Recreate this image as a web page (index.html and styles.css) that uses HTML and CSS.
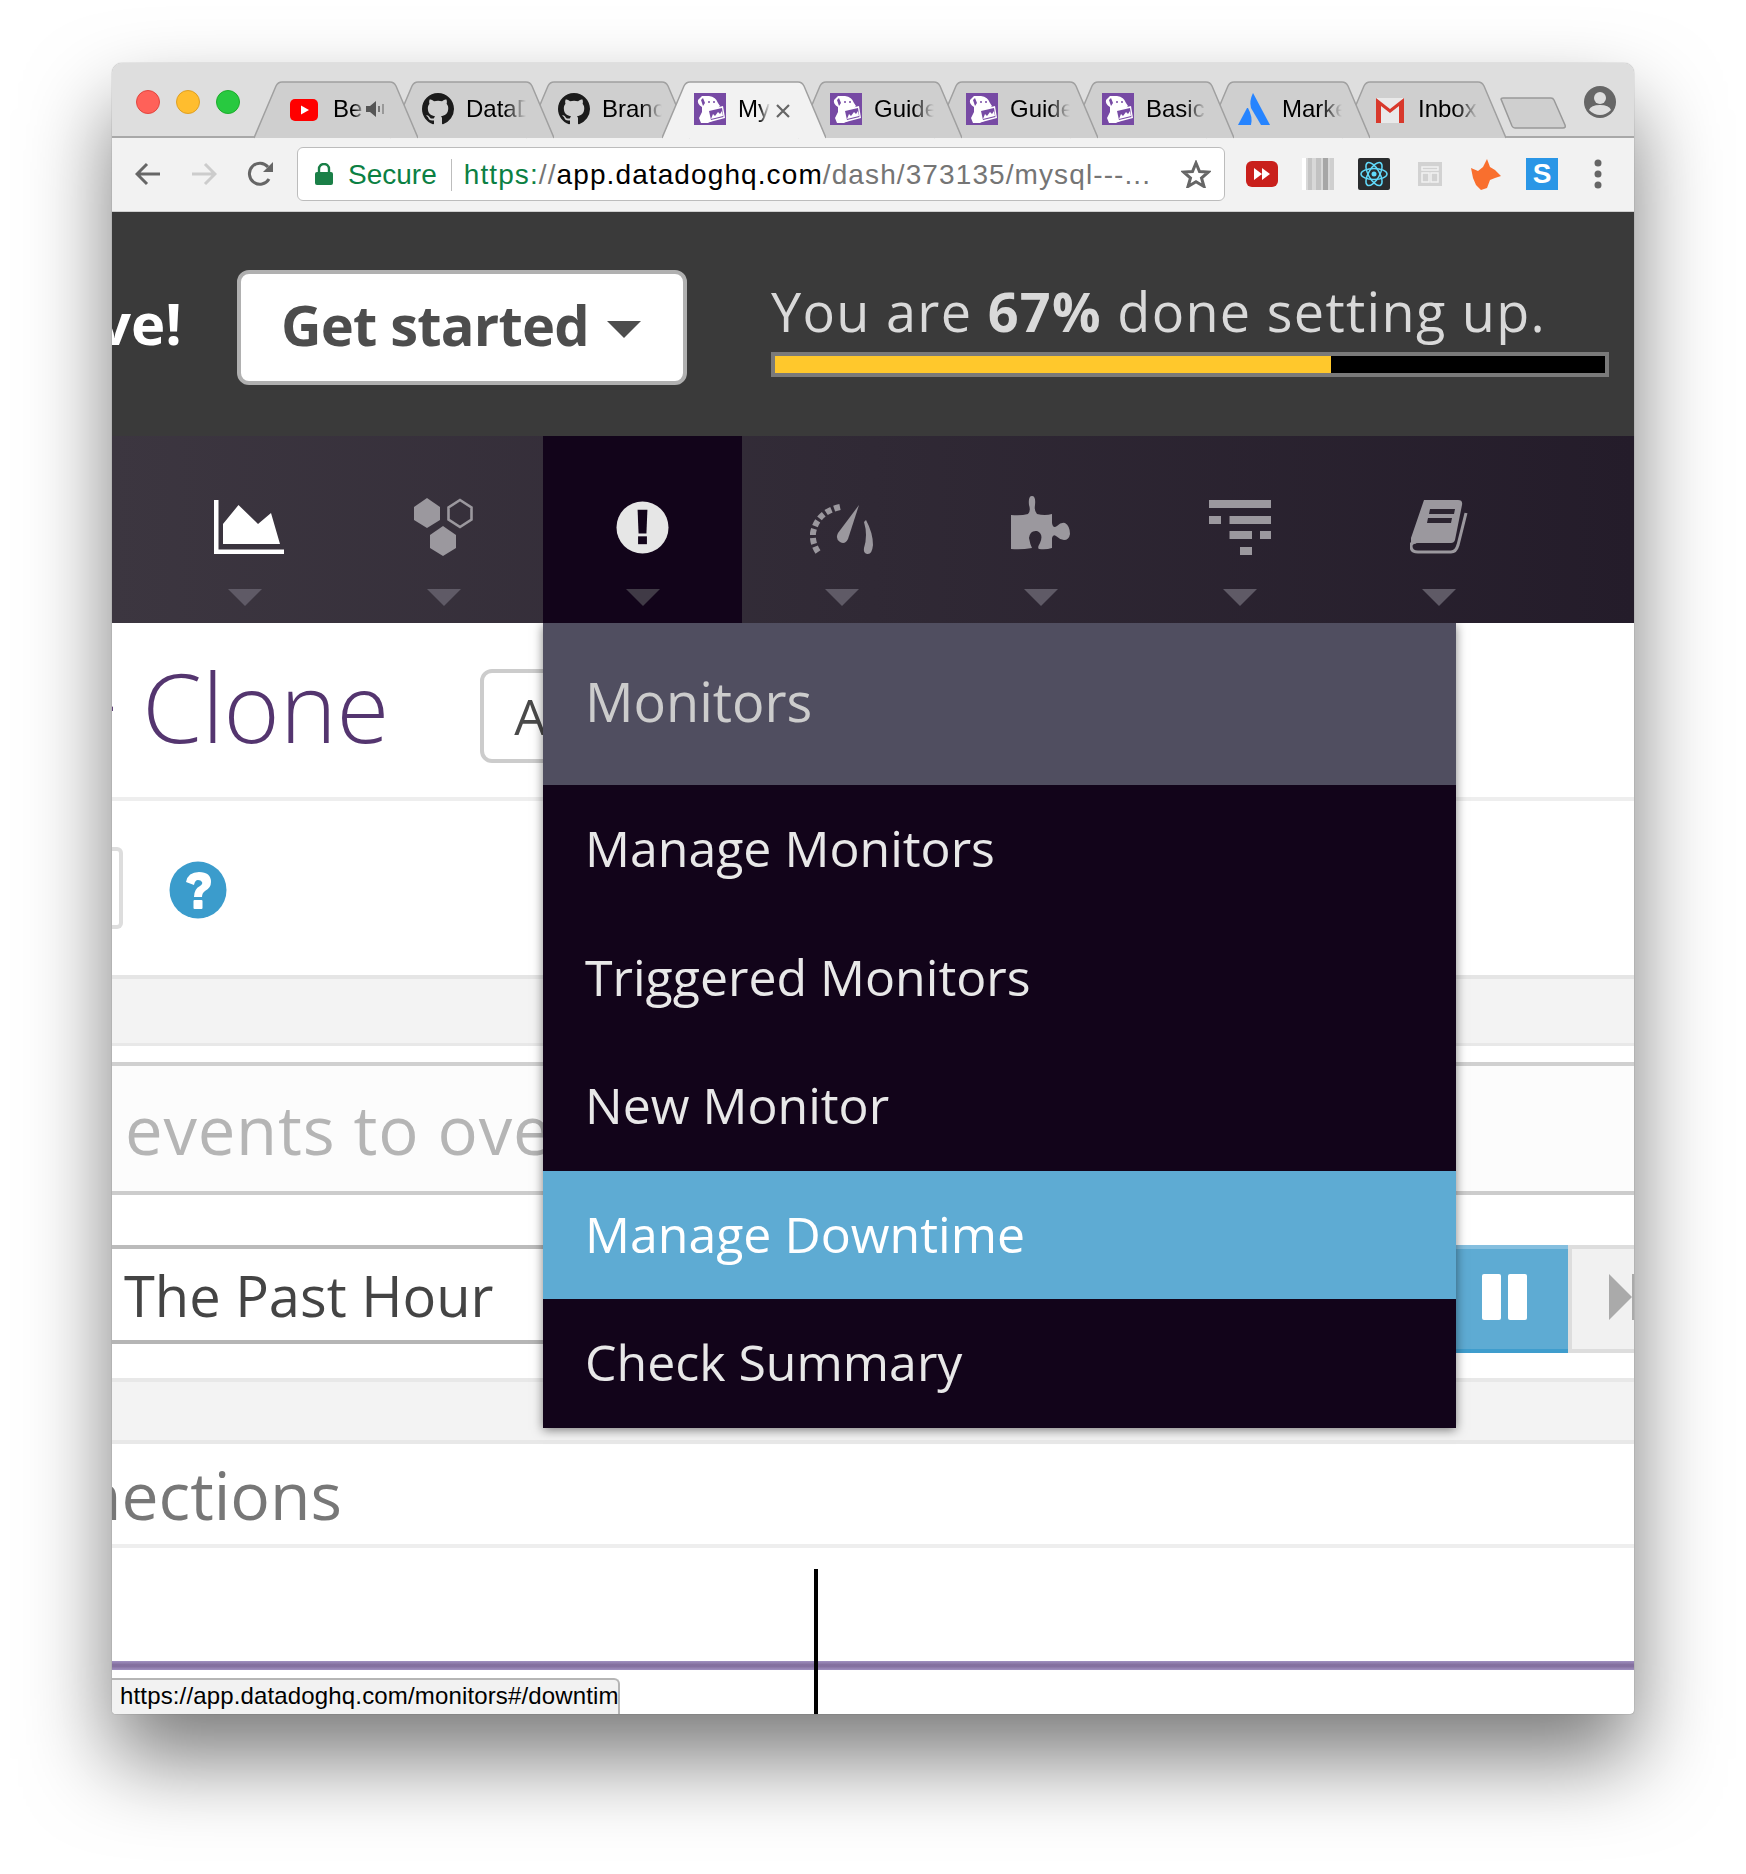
FILE: index.html
```html
<!DOCTYPE html>
<html lang="en">
<head>
    <meta charset="UTF-8">
    <title>Datadog - Manage Downtime</title>
    <link rel="stylesheet" href="styles.css">
</head>
<body>

<svg class="defs" width="0" height="0">
    <defs>
        <symbol id="tabshape" viewBox="0 0 164 58">
            <path d="M0 57 L22 5 Q24 1 28 1 L136 1 Q140 1 142 5 L164 57"/>
        </symbol>
        <symbol id="github" viewBox="0 0 16 16">
            <path fill="#1b1b1b" fill-rule="evenodd" d="M8 0C3.58 0 0 3.58 0 8c0 3.54 2.29 6.53 5.47 7.59.4.07.55-.17.55-.38 0-.19-.01-.82-.01-1.49-2.01.37-2.53-.49-2.69-.94-.09-.23-.48-.94-.82-1.13-.28-.15-.68-.52-.01-.53.63-.01 1.08.58 1.23.82.72 1.21 1.87.87 2.33.66.07-.52.28-.87.51-1.07-1.78-.2-3.64-.89-3.64-3.95 0-.87.31-1.59.82-2.15-.08-.2-.36-1.02.08-2.12 0 0 .67-.21 2.2.82.64-.18 1.32-.27 2-.27s1.36.09 2 .27c1.53-1.04 2.2-.82 2.2-.82.44 1.1.16 1.92.08 2.12.51.56.82 1.27.82 2.15 0 3.07-1.87 3.75-3.65 3.95.29.25.54.73.54 1.48 0 1.07-.01 1.93-.01 2.2 0 .21.15.46.55.38A8.01 8.01 0 0 0 16 8c0-4.42-3.58-8-8-8z"/>
        </symbol>
        <symbol id="dog" viewBox="0 0 32 32">
            <rect width="32" height="32" fill="#774aa4"/>
            <path fill="#fff" d="M4 7 L8 3 L15 3 Q22 4 24 10 L26 13 L23 16 L18 18 L16 21 L18 28 L14 30 L7 30 L5 25 L8 19 L8 14 Q3 11 4 7Z"/>
            <path fill="#774aa4" d="M7 7 L9 5 L11 10 L9 13Z"/>
            <circle fill="#774aa4" cx="15" cy="9" r="1"/>
            <circle fill="#774aa4" cx="20" cy="9" r="1"/>
            <path fill="#fff" d="M13 17 L29 13 L31 25 L16 29Z"/>
            <path fill="#774aa4" d="M15 18 L28 15 L29.500 24 L17 27Z"/>
            <path fill="#fff" d="M17 26 L19 21 L21 23 L24 19 L26 21 L28 18 L29 23Z"/>
        </symbol>
    </defs>
</svg>

<div class="window">

    <!-- tabs -->
    <div class="tabstrip">
        <div class="lights">
            <span class="light red"></span>
            <span class="light yellow"></span>
            <span class="light green"></span>
        </div>
        <div class="tabs">
            <div class="tab tab-yt">
                <svg class="tabbg"><use href="#tabshape"/></svg>
                <svg class="yt-icon" viewBox="0 0 28 22"><rect width="28" height="22" rx="5" fill="#f00"/><path d="M11 6.500 L19 11 L11 15.500Z" fill="#fff"/></svg>
                <span class="title title-short">Be</span>
                <svg class="speaker" viewBox="0 0 19 20"><path d="M0 7 H4 L10 2 V18 L4 13 H0Z" fill="#555"/><rect x="12" y="7" width="2" height="6" fill="#777"/><rect x="16" y="5" width="2" height="10" fill="#999"/></svg>
            </div>
            <div class="tab">
                <svg class="tabbg"><use href="#tabshape"/></svg>
                <svg class="favicon"><use href="#github"/></svg>
                <span class="title">DataD</span>
            </div>
            <div class="tab">
                <svg class="tabbg"><use href="#tabshape"/></svg>
                <svg class="favicon"><use href="#github"/></svg>
                <span class="title">Branch</span>
            </div>
            <div class="tab active">
                <svg class="tabbg"><use href="#tabshape"/></svg>
                <svg class="favicon"><use href="#dog"/></svg>
                <span class="title title-short">My</span>
                <svg class="tabclose" viewBox="0 0 14 14"><path d="M1 1 L13 13 M13 1 L1 13" stroke="#666" stroke-width="2.200" fill="none"/></svg>
            </div>
            <div class="tab">
                <svg class="tabbg"><use href="#tabshape"/></svg>
                <svg class="favicon"><use href="#dog"/></svg>
                <span class="title">Guide</span>
            </div>
            <div class="tab">
                <svg class="tabbg"><use href="#tabshape"/></svg>
                <svg class="favicon"><use href="#dog"/></svg>
                <span class="title">Guide</span>
            </div>
            <div class="tab">
                <svg class="tabbg"><use href="#tabshape"/></svg>
                <svg class="favicon"><use href="#dog"/></svg>
                <span class="title">Basic</span>
            </div>
            <div class="tab">
                <svg class="tabbg"><use href="#tabshape"/></svg>
                <svg class="favicon" viewBox="0 0 32 32"><path d="M15 0 Q11 8 13 15 L23 32 H32Z" fill="#2684ff"/><path d="M9 15 L0 32 H13 Q15 24 10 15Z" fill="#2684ff"/></svg>
                <span class="title">Marke</span>
            </div>
            <div class="tab">
                <svg class="tabbg"><use href="#tabshape"/></svg>
                <svg class="favicon" viewBox="0 0 32 32"><path d="M2 5 H30 V30 H2Z" fill="#e9e9e9"/><path d="M2 5 L16 16 L30 5 V30 H25 V13 L16 20 L7 13 V30 H2Z" fill="#d8392c"/></svg>
                <span class="title">Inbox</span>
            </div>
        </div>
        <svg class="newtab" viewBox="0 0 66 32"><path d="M1 2 Q1 1 3 1 H51 Q53 1 54 3 L65 28 Q66 31 63 31 H15 Q13 31 12 29Z" fill="#cfcfcf" stroke="#999" stroke-width="1.500"/></svg>
        <svg class="profile" viewBox="0 0 32 32"><circle cx="16" cy="16" r="16" fill="#666"/><circle cx="16" cy="12" r="6" fill="#dedede"/><path d="M5 24 Q7 19 16 19 Q25 19 27 24 Q22 29 16 29 Q10 29 5 24Z" fill="#dedede"/></svg>
    </div>

    <!-- address bar -->
    <div class="toolbar">
        <svg class="nav-btn" viewBox="0 0 26 24"><path d="M25 12 H3 M12 2 L2 12 L12 22" stroke="#666" stroke-width="3" fill="none"/></svg>
        <svg class="nav-btn fwd" viewBox="0 0 26 24"><path d="M1 12 H23 M14 2 L24 12 L14 22" stroke="#ccc" stroke-width="3" fill="none"/></svg>
        <svg class="nav-btn reload" viewBox="0 0 27 26"><path d="M22 18 A10.500 10.500 0 1 1 21 6" stroke="#666" stroke-width="3" fill="none"/><path d="M26 1 V11 H16Z" fill="#666"/></svg>
        <div class="omnibox">
            <svg class="lock" viewBox="0 0 18 22"><path d="M4 9 V6 A5 5 0 0 1 14 6 V9" stroke="#1a7f47" stroke-width="2.400" fill="none"/><rect y="9" width="18" height="13" rx="2" fill="#1a7f47"/></svg>
            <span class="secure">Secure</span>
            <span class="url"><span class="url-green">https:</span><span class="url-gray">//</span><span class="url-host">app.datadoghq.com</span><span class="url-gray">/dash/373135/mysql---...</span></span>
            <svg class="star" viewBox="0 0 30 28"><path d="M15 3 L18.500 11.500 L27.500 12 L20.500 18 L23 26.500 L15 21.800 L7 26.500 L9.500 18 L2.500 12 L11.500 11.500Z" stroke="#666" stroke-width="3" fill="none"/></svg>
        </div>
        <div class="extensions">
            <svg class="ext" viewBox="0 0 32 32"><rect y="3" width="32" height="26" rx="6" fill="#c9201c"/><path d="M8 10 L16 16 L8 22Z M16 10 L24 16 L16 22Z" fill="#fff"/></svg>
            <svg class="ext" viewBox="0 0 32 32"><rect width="32" height="32" fill="#d8d8d8"/><rect width="4" height="32" fill="#fff"/><rect x="6" width="4" height="32" fill="#c4c4c4"/><rect x="14" width="5" height="32" fill="#c2c2c2"/><rect x="21" width="5" height="32" fill="#a6a6a6"/><rect x="28" width="4" height="32" fill="#cfcfcf"/></svg>
            <svg class="ext" viewBox="0 0 32 32"><rect width="32" height="32" rx="2" fill="#2a2c2e"/><g fill="none" stroke="#61dafb" stroke-width="1.500"><ellipse cx="16" cy="16" rx="13" ry="5.500"/><ellipse cx="16" cy="16" rx="13" ry="5.500" transform="rotate(60 16 16)"/><ellipse cx="16" cy="16" rx="13" ry="5.500" transform="rotate(120 16 16)"/></g><circle cx="16" cy="16" r="2.500" fill="#61dafb"/></svg>
            <svg class="ext" viewBox="0 0 32 32"><rect x="4" y="4" width="24" height="24" fill="#d2d2d2"/><path d="M8 9 H24 V12 H8Z M8 15 H15 V24 H8Z M17 15 H24 V24 H17Z" fill="none" stroke="#f2f2f2" stroke-width="1.500"/></svg>
            <svg class="ext" viewBox="0 0 32 32"><path d="M1 10 L8 13 L13 9 L17 1 L20 9 L25 12 L31 18 L25 20 L20 22 L17 30 L11 32 L6 27 L3 20Z" fill="#f96f2e"/></svg>
            <div class="ext ext-s">S</div>
            <svg class="ext" viewBox="0 0 32 32"><circle cx="16" cy="5" r="3.500" fill="#666"/><circle cx="16" cy="16" r="3.500" fill="#666"/><circle cx="16" cy="27" r="3.500" fill="#666"/></svg>
        </div>
    </div>

    <!-- page -->
    <div class="promo">
        <span class="promo-end">ve!</span>
        <div class="started">Get started <span class="caret"></span></div>
        <div class="setup">
            <div class="setup-text">You are <b>67%</b> done setting up.</div>
            <div class="setup-bar"><div class="setup-fill" style="width: 67%"></div></div>
        </div>
    </div>

    <nav class="mainnav">
        <div class="navitem">
            <div class="navslot">
                <svg class="icon-chart" viewBox="0 0 70 54"><path d="M0 0 H4.500 V49.500 H70 V54 H0Z" fill="#fff"/><path d="M9 44 V24 L24.500 5 L44 24 L57 13 L66 44Z" fill="#fff"/></svg>
            </div>
            <span class="navarrow"></span>
        </div>
        <div class="navitem">
            <div class="navslot">
                <svg class="icon-hex" viewBox="0 0 60 58"><g fill="#9b989e"><path d="M13 0 L26 9 V22 L13 30 L0 22 V9Z"/><path d="M29 28 L42 37 V50 L29 58 L16 50 V37Z"/></g><path d="M46 2 L57.500 9.500 V21.500 L46 29 L34.500 21.500 V9.500Z" fill="none" stroke="#9b989e" stroke-width="2.600"/></svg>
            </div>
            <span class="navarrow"></span>
        </div>
        <div class="navitem active">
            <div class="navslot">
                <svg class="icon-alert" viewBox="0 0 54 54"><circle cx="27" cy="27" r="26.500" fill="#e6e6e6"/><path d="M22 9 H32 L31 33 H23Z" fill="#12041a"/><rect x="22.500" y="36" width="9" height="8" fill="#12041a"/></svg>
            </div>
            <span class="navarrow"></span>
        </div>
        <div class="navitem">
            <div class="navslot">
                <svg class="icon-gauge" viewBox="0 0 64 52"><g fill="none" stroke="#9b989e" stroke-width="6" stroke-dasharray="6 3"><path d="M8 49 Q2 40 3 30 Q7 9 30 4"/></g><path d="M49 2 L38 36 Q35 42 30 39 Q25 36 28 30Z" fill="#9b989e"/><path d="M56 17 Q63 30 63 42 Q62 52 57 51 Q53 50 54 45 Q58 32 54 19Z" fill="#9b989e"/></svg>
            </div>
            <span class="navarrow"></span>
        </div>
        <div class="navitem">
            <div class="navslot">
                <svg class="icon-puzzle" viewBox="0 0 59 54"><path fill="#9b989e" d="M0 19 Q10 20 17 18 Q20 15 18 9 Q17 0 21 0 Q25 0 24 9 Q23 15 26 18 Q34 20 41 18 L41 27 Q42 33 46 30 Q50 26 54 27 Q59 30 59 38 Q58 44 53 44 Q48 43 45 40 Q42 38 41 42 L41 52 Q35 54 28 53 Q26 52 29 47 Q33 38 26 35 Q19 34 18 42 Q19 48 21 52 Q10 54 0 53Z"/></svg>
            </div>
            <span class="navarrow"></span>
        </div>
        <div class="navitem">
            <div class="navslot">
                <svg class="icon-filter" viewBox="0 0 62 55"><g fill="#9b989e"><rect width="62" height="8"/><rect y="16" width="12" height="8"/><rect x="20.500" y="16" width="41.500" height="8"/><rect x="20.500" y="31" width="22.500" height="8"/><rect x="51" y="31" width="11" height="8"/><rect x="31" y="47" width="12" height="8"/></g></svg>
            </div>
            <span class="navarrow"></span>
        </div>
        <div class="navitem">
            <div class="navslot">
                <svg class="icon-book" viewBox="0 0 58 54"><path fill="#9b989e" d="M14 0 H48 Q53 0 52 5 L45 40 Q44 43 41 43 H8 Q3 43 1 47 L1 38Z"/><path fill="none" stroke="#9b989e" stroke-width="3" d="M56 13 L48 45 Q46 52 41 52 H8 Q1 52 1 46 Q1 42 6 42"/><path fill="#2b2430" d="M20 9 H45 L44 14 H19Z M18 18 H42 L41 23 H17Z"/></svg>
            </div>
            <span class="navarrow"></span>
        </div>
    </nav>

    <div class="content">
        <div class="title-row">
            <span class="title-dash">-</span>
            <span class="clone">Clone</span>
            <div class="title-btn">Add</div>
        </div>

        <div class="help-row">
            <div class="box-end"></div>
            <svg class="help" viewBox="0 0 58 58"><circle cx="29" cy="29" r="28.500" fill="#3b9ccc"/><path d="M17 21 Q19 11 30 11 Q42 11 42 21 Q42 27 36 30 Q33 32 33 36 H25 Q25 28 31 25 Q34 23 33 21 Q32 19 29 19 Q26 19 25 24Z" fill="#fff"/><rect x="24.500" y="39" width="9" height="9" rx="1" fill="#fff"/></svg>
        </div>

        <div class="texture tex-first"></div>

        <div class="events-row">events to overlay</div>

        <div class="time-row">
            <div class="time-field">The Past Hour</div>
            <div class="pause"><span></span><span></span></div>
            <div class="next"><svg class="next-icon" viewBox="0 0 25 46"><path d="M0 0 L23 23 L0 46Z" fill="#aaa"/><rect x="23" width="2" height="46" fill="#aaa"/></svg></div>
        </div>

        <div class="texture tex-second"></div>

        <div class="conn-row">nections</div>

        <div class="graph">
            <div class="graph-line"></div>
            <div class="crosshair"></div>
        </div>

        <!-- dropdown -->
        <div class="menu">
            <div class="menu-head">Monitors</div>
            <div class="menu-item">Manage Monitors</div>
            <div class="menu-item">Triggered Monitors</div>
            <div class="menu-item">New Monitor</div>
            <div class="menu-item hover">Manage Downtime</div>
            <div class="menu-item">Check Summary</div>
        </div>

        <div class="status">https://app.datadoghq.com/monitors#/downtime</div>
    </div>
</div>

</body>
</html>
```

FILE: styles.css
```css
body {
    margin: 0;
    padding: 63px 112px 0;
    height: 1874px;
    box-sizing: border-box;
    background-color: #fff;
    overflow: hidden;
    font-family: "Open Sans", sans-serif;
}
.defs {
    position: absolute;
}
.window {
    width: 1522px;
    height: 1651px;
    border-radius: 10px 10px 4px 4px;
    overflow: hidden;
    box-shadow: 0 45px 85px rgba(0, 0, 0, 0.52), 0 0 1px rgba(0, 0, 0, 0.6);
    background-color: #fff;
    display: flex;
    flex-direction: column;
}

/* tab strip */
.tabstrip {
    height: 75px;
    flex: none;
    box-sizing: border-box;
    background-color: #dedede;
    border-bottom: 2px solid #a8a8a8;
    display: flex;
    align-items: flex-start;
    position: relative;
    font-family: "Liberation Sans", Arial, sans-serif;
}
.lights {
    display: flex;
    gap: 16px;
    padding: 27px 0 0 24px;
    width: 118px;
    flex: none;
}
.light {
    width: 24px;
    height: 24px;
    border-radius: 50%;
    box-sizing: border-box;
}
.red { background-color: #ff6159; border: 1px solid #e2463f; }
.yellow { background-color: #ffbd2e; border: 1px solid #dfa023; }
.green { background-color: #28c940; border: 1px solid #1dad2b; }
.tabs {
    display: flex;
    margin-top: 18px;
}
.tab {
    width: 136px;
    height: 57px;
    flex: none;
    position: relative;
    box-sizing: border-box;
    padding: 12px 0 0 32px;
    display: flex;
    align-items: flex-start;
}
.tab:nth-child(1) { z-index: 9; }
.tab:nth-child(2) { z-index: 8; }
.tab:nth-child(3) { z-index: 7; }
.tab:nth-child(4) { z-index: 10; }
.tab:nth-child(5) { z-index: 5; }
.tab:nth-child(6) { z-index: 4; }
.tab:nth-child(7) { z-index: 3; }
.tab:nth-child(8) { z-index: 2; }
.tab:nth-child(9) { z-index: 1; }
.tabbg {
    position: absolute;
    left: 0;
    top: 0;
    width: 164px;
    height: 58px;
    fill: #cfcfcf;
    stroke: #a0a0a0;
    stroke-width: 1.5;
}
.tab.active .tabbg {
    fill: #f2f2f2;
}
.favicon {
    width: 32px;
    height: 32px;
    flex: none;
    position: relative;
}
.yt-icon {
    width: 28px;
    height: 22px;
    flex: none;
    margin: 6px 0 0 4px;
    position: relative;
}
.title {
    position: relative;
    margin: 2px 0 0 12px;
    width: 62px;
    font-size: 24px;
    line-height: 28px;
    color: #000;
    white-space: nowrap;
    overflow: hidden;
    -webkit-mask-image: linear-gradient(to right, #000 65%, transparent 100%);
    mask-image: linear-gradient(to right, #000 65%, transparent 100%);
}
.title-short {
    width: 32px;
}
.tab-yt .title {
    margin-left: 15px;
}
.speaker {
    width: 19px;
    height: 20px;
    flex: none;
    position: relative;
    margin: 6px 0 0 1px;
}
.tabclose {
    width: 14px;
    height: 14px;
    flex: none;
    position: relative;
    margin: 11px 0 0 6px;
}
.newtab {
    position: absolute;
    left: 1388px;
    top: 34px;
    width: 66px;
    height: 32px;
}
.profile {
    position: absolute;
    left: 1472px;
    top: 23px;
    width: 32px;
    height: 32px;
}

/* toolbar */
.toolbar {
    height: 74px;
    flex: none;
    box-sizing: border-box;
    background-color: #f2f2f2;
    border-bottom: 1px solid #cfcfcf;
    display: flex;
    align-items: center;
    padding: 0 0 1px 23px;
    font-family: "Liberation Sans", Arial, sans-serif;
}
.nav-btn {
    width: 26px;
    height: 24px;
    flex: none;
    margin-right: 30px;
}
.nav-btn.reload {
    width: 27px;
    height: 26px;
    margin-right: 23px;
}
.omnibox {
    width: 928px;
    height: 54px;
    flex: none;
    box-sizing: border-box;
    background-color: #fff;
    border: 1.5px solid #bcbcbc;
    border-radius: 6px;
    display: flex;
    align-items: center;
    padding-left: 17px;
    font-size: 28px;
}
.lock {
    width: 18px;
    height: 22px;
    flex: none;
    margin-right: 15px;
}
.secure {
    color: #0b8043;
    padding-right: 14px;
    border-right: 1px solid #bdbdbd;
    line-height: 32px;
    margin-top: 2px;
}
.url {
    padding-left: 12px;
    white-space: nowrap;
    flex: 1;
    letter-spacing: 1.1px;
    margin-top: 2px;
}
.url-green { color: #0b8043; }
.url-gray { color: #757575; }
.url-host { color: #000; }
.star {
    width: 30px;
    height: 28px;
    flex: none;
    margin-right: 13px;
}
.extensions {
    display: flex;
    gap: 24px;
    margin-left: 21px;
}
.ext {
    width: 32px;
    height: 32px;
    flex: none;
}
.ext-s {
    background-color: #2a96e6;
    color: #fff;
    font-weight: bold;
    font-size: 28px;
    line-height: 32px;
    text-align: center;
}

/* promo bar */
.promo {
    height: 224px;
    flex: none;
    background-color: #3a3a3a;
    display: flex;
    align-items: flex-start;
    overflow: hidden;
}
.promo-end {
    flex: none;
    width: 125px;
    margin-top: 73px;
    font-size: 58px;
    line-height: 76px;
    font-weight: 700;
    color: #fff;
    text-indent: -14px;
    white-space: nowrap;
}
.started {
    flex: none;
    width: 450px;
    height: 115px;
    margin-top: 58px;
    box-sizing: border-box;
    background-color: #fff;
    border: 4px solid #b0b0b0;
    border-radius: 12px;
    color: #4d4d4d;
    font-size: 56px;
    font-weight: 700;
    letter-spacing: -0.8px;
    line-height: 100px;
    padding-left: 40px;
    white-space: nowrap;
}
.caret {
    display: inline-block;
    border-left: 17px solid transparent;
    border-right: 17px solid transparent;
    border-top: 17px solid #4d4d4d;
    vertical-align: 8px;
    margin-left: 4px;
}
.setup {
    margin: 63px 0 0 84px;
    width: 838px;
}
.setup-text {
    font-size: 54px;
    line-height: 72px;
    color: #d9d9d9;
    letter-spacing: 1.3px;
    white-space: nowrap;
}
.setup-bar {
    margin-top: 5px;
    height: 25px;
    box-sizing: border-box;
    background-color: #000;
    border: 4px solid #7a7a7a;
}
.setup-fill {
    height: 100%;
    background-color: #ffc82c;
}

/* main nav */
.mainnav {
    height: 187px;
    flex: none;
    box-sizing: border-box;
    background: linear-gradient(to right, #3c3640, #241c2a);
    display: flex;
    padding-left: 33px;
}
.navitem {
    width: 199px;
    flex: none;
    display: flex;
    flex-direction: column;
    align-items: center;
}
.navitem.active {
    background-color: #12041a;
}
.navslot {
    height: 62px;
    margin-top: 60px;
    display: flex;
    align-items: center;
    justify-content: center;
}
.icon-chart { width: 70px; height: 54px; margin-left: 8px; }
.icon-hex { width: 60px; height: 58px; }
.icon-alert { width: 53px; height: 53px; }
.icon-gauge { width: 64px; height: 52px; margin-top: 3px; }
.icon-puzzle { width: 59px; height: 54px; margin-bottom: 8px; }
.icon-filter { width: 62px; height: 55px; }
.icon-book { width: 58px; height: 54px; }
.navarrow {
    margin-top: 31px;
    border-left: 17px solid transparent;
    border-right: 17px solid transparent;
    border-top: 17px solid #5f5a66;
}
.navitem.active .navarrow {
    border-top-color: #403a46;
}

/* page content */
.content {
    flex: 1;
    position: relative;
    overflow: hidden;
    min-height: 0;
}
.title-row {
    height: 178px;
    box-sizing: border-box;
    border-bottom: 4px solid #eee;
    display: flex;
    align-items: flex-start;
    white-space: nowrap;
}
.title-dash {
    font-size: 60px;
    color: #54356f;
    margin: 38px 0 0 -16px;
}
.clone {
    font-size: 96px;
    line-height: 130px;
    font-weight: 300;
    color: #54356f;
    margin: 18px 0 0 27px;
}
.title-btn {
    width: 200px;
    height: 94px;
    margin: 46px 0 0 91px;
    box-sizing: border-box;
    border: 4px solid #ccc;
    border-radius: 12px;
    font-size: 50px;
    line-height: 86px;
    color: #4a4a4a;
    padding-left: 30px;
}
.help-row {
    height: 178px;
    box-sizing: border-box;
    border-bottom: 4px solid #e5e5e5;
    display: flex;
    align-items: center;
    gap: 46px;
}
.box-end {
    width: 11px;
    height: 82px;
    box-sizing: border-box;
    border: 4px solid #ddd;
    border-left: 0;
    border-radius: 0 6px 6px 0;
}
.help {
    width: 58px;
    height: 58px;
    margin-top: 4px;
}
.texture {
    background-color: #f3f3f3;
}
.tex-first {
    height: 67px;
    box-sizing: border-box;
    border-bottom: 3px solid #e8e8e8;
    margin-bottom: 16px;
}
.events-row {
    height: 133px;
    box-sizing: border-box;
    background-color: #fcfcfc;
    border-top: 4px solid #d0d0d0;
    border-bottom: 4px solid #ccc;
    font-size: 67px;
    font-weight: 500;
    line-height: 126px;
    letter-spacing: 0.8px;
    color: #b5b5b5;
    padding-left: 13px;
    white-space: nowrap;
}
.time-row {
    height: 183px;
    box-sizing: border-box;
    display: flex;
    align-items: flex-start;
    padding-top: 50px;
}
.time-field {
    width: 1344px;
    flex: none;
    height: 99px;
    box-sizing: border-box;
    border-top: 4px solid #bbb;
    border-bottom: 4px solid #b5b5b5;
    font-size: 56px;
    line-height: 92px;
    color: #444;
    padding-left: 12px;
}
.pause {
    width: 112px;
    height: 108px;
    flex: none;
    box-sizing: border-box;
    background-color: #5eabd3;
    border-top: 4px solid #85bfdf;
    border-bottom: 4px solid #3f9dcd;
    display: flex;
    gap: 7px;
    padding: 25px 0 0 26px;
}
.pause span {
    width: 19px;
    height: 46px;
    background-color: #fff;
    border-radius: 2px;
}
.next {
    flex: none;
    width: 66px;
    height: 108px;
    box-sizing: border-box;
    background-color: #f1f1f1;
    border: 4px solid #ddd;
    border-right: 0;
    padding: 25px 0 0 37px;
}
.next-icon {
    display: block;
    width: 25px;
    height: 46px;
}
.tex-second {
    height: 66px;
    box-sizing: border-box;
    border-top: 4px solid #e8e8e8;
    border-bottom: 4px solid #e8e8e8;
}
.conn-row {
    height: 104px;
    box-sizing: border-box;
    border-bottom: 4px solid #eee;
    font-size: 66px;
    line-height: 100px;
    color: #777;
    text-indent: -31px;
    white-space: nowrap;
}
.graph {
    height: 166px;
    box-sizing: border-box;
    padding-top: 113px;
    position: relative;
}
.graph-line {
    height: 9px;
    background: linear-gradient(to bottom, #a090c0, #84709f 40%, #84709f 60%, #a090c0);
}
.crosshair {
    position: absolute;
    left: 702px;
    top: 21px;
    bottom: 0;
    width: 4px;
    background-color: #000;
}

/* dropdown menu */
.menu {
    position: absolute;
    left: 431px;
    top: 0;
    width: 913px;
    box-shadow: 0 2px 10px rgba(0, 0, 0, 0.5);
    background-color: #12041a;
    font-size: 50px;
    color: #e8e8e8;
}
.menu-head {
    height: 162px;
    line-height: 156px;
    padding-left: 42px;
    background-color: #504e60;
    color: #ccc;
    font-size: 54px;
}
.menu-item {
    height: 128.600px;
    line-height: 126px;
    padding-left: 42px;
}
.menu-item.hover {
    background-color: #5eabd3;
    color: #fff;
}

/* status bubble */
.status {
    position: absolute;
    left: 0;
    bottom: 0;
    width: 508px;
    height: 36px;
    box-sizing: border-box;
    background-color: #f2f2f2;
    border: 2px solid #b5b5b5;
    border-left: 0;
    border-bottom: 0;
    border-radius: 0 6px 0 0;
    padding-left: 8px;
    font-family: "Liberation Sans", Arial, sans-serif;
    font-size: 24px;
    letter-spacing: 0.15px;
    line-height: 31px;
    color: #000;
    white-space: nowrap;
    overflow: hidden;
}
```
